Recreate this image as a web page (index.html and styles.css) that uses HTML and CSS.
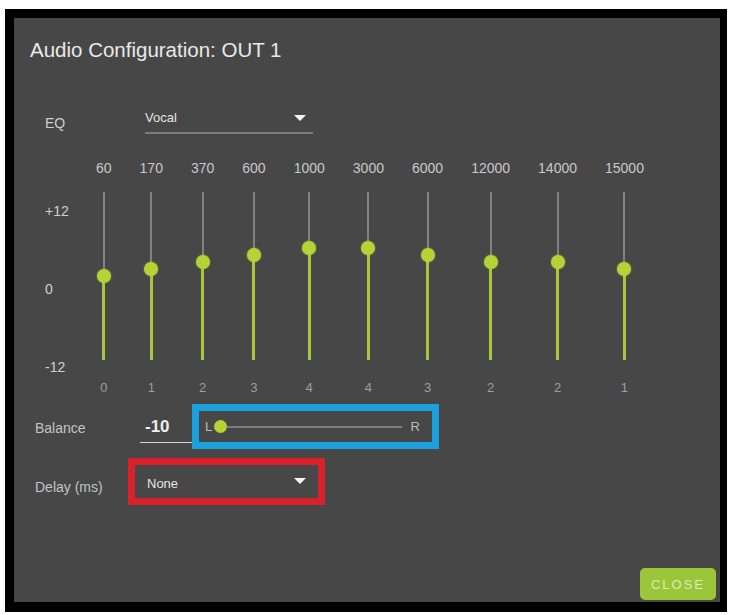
FILE: index.html
```html
<!DOCTYPE html>
<html lang="en">
<head>
    <meta charset="UTF-8">
    <meta name="viewport" content="width=device-width, initial-scale=1.0">
    <title>Audio Configuration: OUT 1</title>
    <link rel="stylesheet" href="styles.css">
</head>
<body>
    <div class="dialog">
        <h1 class="title">Audio Configuration: OUT 1</h1>

        <div class="eq-row">
            <span class="eq-label">EQ</span>
            <div class="select">
                <span>Vocal</span>
                <span class="caret"></span>
            </div>
        </div>

        <div class="bands">
            <div class="axis">
                <span>+12</span>
                <span>0</span>
                <span>-12</span>
            </div>
            <div class="band-list">
                <div class="band">
                    <span class="freq">60</span>
                    <div class="track"><div class="fill" style="height: 84px"></div></div>
                    <span class="gain">0</span>
                </div>
                <div class="band">
                    <span class="freq">170</span>
                    <div class="track"><div class="fill" style="height: 91px"></div></div>
                    <span class="gain">1</span>
                </div>
                <div class="band">
                    <span class="freq">370</span>
                    <div class="track"><div class="fill" style="height: 98px"></div></div>
                    <span class="gain">2</span>
                </div>
                <div class="band">
                    <span class="freq">600</span>
                    <div class="track"><div class="fill" style="height: 105px"></div></div>
                    <span class="gain">3</span>
                </div>
                <div class="band">
                    <span class="freq">1000</span>
                    <div class="track"><div class="fill" style="height: 112px"></div></div>
                    <span class="gain">4</span>
                </div>
                <div class="band">
                    <span class="freq">3000</span>
                    <div class="track"><div class="fill" style="height: 112px"></div></div>
                    <span class="gain">4</span>
                </div>
                <div class="band">
                    <span class="freq">6000</span>
                    <div class="track"><div class="fill" style="height: 105px"></div></div>
                    <span class="gain">3</span>
                </div>
                <div class="band">
                    <span class="freq">12000</span>
                    <div class="track"><div class="fill" style="height: 98px"></div></div>
                    <span class="gain">2</span>
                </div>
                <div class="band">
                    <span class="freq">14000</span>
                    <div class="track"><div class="fill" style="height: 98px"></div></div>
                    <span class="gain">2</span>
                </div>
                <div class="band">
                    <span class="freq">15000</span>
                    <div class="track"><div class="fill" style="height: 91px"></div></div>
                    <span class="gain">1</span>
                </div>
            </div>
        </div>

        <div class="balance-row">
            <span class="row-label balance-label">Balance</span>
            <span class="balance-value">-10</span>
            <div class="balance-box">
                <span class="side">L</span>
                <div class="lr-slider">
                    <span class="lr-thumb"></span>
                    <span class="lr-line"></span>
                </div>
                <span class="side side-r">R</span>
            </div>
        </div>

        <div class="delay-row">
            <span class="row-label delay-label">Delay (ms)</span>
            <div class="delay-box">
                <span>None</span>
                <span class="caret caret-up"></span>
            </div>
        </div>

        <div class="footer">
            <button class="close-btn">CLOSE</button>
        </div>
    </div>
</body>
</html>
```

FILE: styles.css
```css
body {
    margin: 0;
    background-color: #fff;
    font-family: "Liberation Sans", Arial, sans-serif;
}
.dialog {
    display: flex;
    flex-direction: column;
    width: 706px;
    height: 584px;
    margin: 9px 0 0 5px;
    border: solid #000;
    border-width: 9px 7px 10px 9px;
    background-color: #474747;
}
.title {
    margin: 0;
    padding: 20px 0 0 16px;
    font-size: 20.5px;
    line-height: 24px;
    font-weight: normal;
    color: #e9e9e9;
}
.eq-row {
    display: flex;
    align-items: flex-start;
    margin: 41px 0 0 31px;
}
.eq-label {
    width: 100px;
    margin-top: 10px;
    font-size: 14px;
    line-height: 20px;
    color: #cfcfcf;
}
.select {
    display: flex;
    align-items: center;
    justify-content: space-between;
    width: 168px;
    padding: 5px 0 4px;
    border-bottom: 2px solid #7c7c7c;
    font-size: 13px;
    line-height: 20px;
    color: #e4e4e4;
}
.caret {
    width: 0;
    height: 0;
    margin-right: 7px;
    border-left: 6px solid transparent;
    border-right: 6px solid transparent;
    border-top: 6px solid #f4f4f4;
}
.bands {
    display: flex;
    margin: 24px 0 0 31px;
}
.axis {
    display: flex;
    flex-direction: column;
    gap: 58px;
    width: 51px;
    padding-top: 43px;
    font-size: 14px;
    line-height: 20px;
    color: #cfcfcf;
}
.band-list {
    display: flex;
    gap: 28px;
}
.band {
    display: flex;
    flex-direction: column;
    align-items: center;
}
.freq {
    font-size: 14px;
    line-height: 20px;
    color: #c9c9c9;
}
.track {
    position: relative;
    display: flex;
    justify-content: center;
    width: 14px;
    height: 168px;
    margin: 14px 0 18px;
}
.track::before {
    content: "";
    width: 2px;
    height: 100%;
    background-color: #828282;
}
.fill {
    position: absolute;
    bottom: 0;
    left: 5.5px;
    width: 3px;
    background-color: #a9c73a;
}
.fill::after {
    content: "";
    position: absolute;
    top: -7px;
    left: -5.5px;
    width: 14px;
    height: 14px;
    border-radius: 50%;
    background-color: #b5d334;
    box-shadow: 0 0 2px rgba(190, 220, 60, 0.6);
}
.gain {
    font-size: 13px;
    line-height: 20px;
    color: #9e9e9e;
}
.balance-row {
    display: flex;
    align-items: flex-start;
    margin: 6px 0 0 21px;
}
.row-label {
    font-size: 14px;
    line-height: 20px;
    color: #c4c4c4;
}
.balance-label {
    width: 105px;
    margin-top: 14px;
}
.balance-value {
    box-sizing: border-box;
    width: 52px;
    padding: 13px 0 5px 5px;
    border-bottom: 1px solid #d4d4d4;
    font-size: 17px;
    font-weight: bold;
    line-height: 20px;
    color: #eeeeee;
}
.balance-box {
    box-sizing: border-box;
    display: flex;
    align-items: center;
    width: 247px;
    height: 45px;
    padding: 0 12px 0 6px;
    border: 7px solid #1ba1de;
}
.side {
    font-size: 13px;
    color: #bdbdbd;
}
.side-r {
    margin-left: 9px;
}
.lr-slider {
    display: flex;
    align-items: center;
    flex: 1;
    margin-left: 2px;
}
.lr-thumb {
    width: 13px;
    height: 13px;
    border-radius: 50%;
    background-color: #b5d334;
}
.lr-line {
    flex: 1;
    height: 2px;
    background-color: #7e7e7e;
}
.delay-row {
    display: flex;
    align-items: flex-start;
    margin: 9px 0 0 21px;
}
.delay-label {
    width: 93px;
    margin-top: 19px;
}
.delay-box {
    box-sizing: border-box;
    display: flex;
    align-items: center;
    justify-content: space-between;
    width: 197px;
    height: 47px;
    padding: 4px 12px 0;
    border: 7px solid #d8212b;
    font-size: 13px;
    color: #e4e4e4;
}
.caret-up {
    margin: 0 0 6px;
}
.footer {
    display: flex;
    justify-content: flex-end;
    margin-top: auto;
    padding: 0 4px 2px 0;
}
.close-btn {
    width: 76px;
    height: 32px;
    padding: 0;
    border: none;
    border-radius: 5px;
    background-color: #9cc63a;
    font-family: "Liberation Sans", Arial, sans-serif;
    font-size: 13px;
    letter-spacing: 2px;
    color: #dcebb8;
}
```
